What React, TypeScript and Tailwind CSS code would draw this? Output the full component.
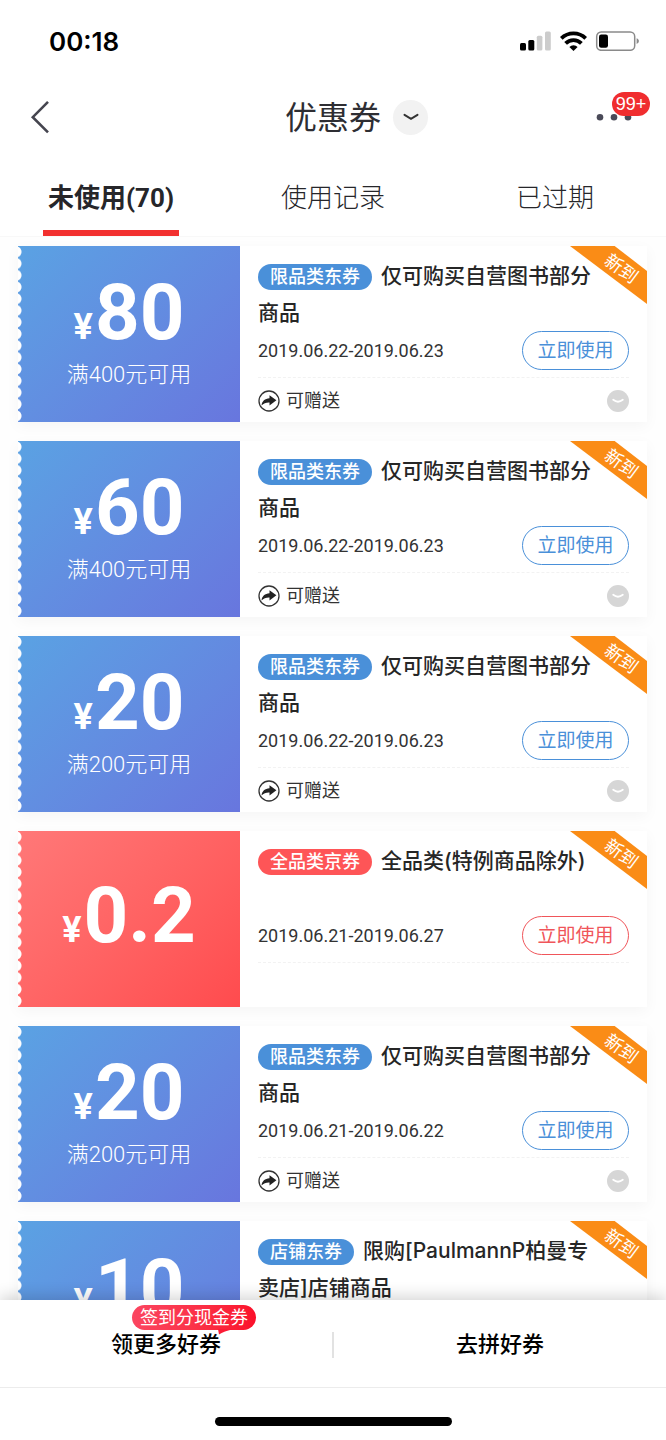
import React from "react";
import clsx from "clsx";

type Coupon = {
  id: number;
  amount: string;
  condition?: string;
  tag: string;
  title: string;
  period: string;
  giftable?: boolean;
  tone: "blue" | "red";
};

const coupons: Coupon[] = [
  {
    id: 1,
    amount: "80",
    condition: "满400元可用",
    tag: "限品类东券",
    title: "仅可购买自营图书部分商品",
    period: "2019.06.22-2019.06.23",
    giftable: true,
    tone: "blue",
  },
  {
    id: 2,
    amount: "60",
    condition: "满400元可用",
    tag: "限品类东券",
    title: "仅可购买自营图书部分商品",
    period: "2019.06.22-2019.06.23",
    giftable: true,
    tone: "blue",
  },
  {
    id: 3,
    amount: "20",
    condition: "满200元可用",
    tag: "限品类东券",
    title: "仅可购买自营图书部分商品",
    period: "2019.06.22-2019.06.23",
    giftable: true,
    tone: "blue",
  },
  {
    id: 4,
    amount: "0.2",
    tag: "全品类京券",
    title: "全品类(特例商品除外)",
    period: "2019.06.21-2019.06.27",
    tone: "red",
  },
  {
    id: 5,
    amount: "20",
    condition: "满200元可用",
    tag: "限品类东券",
    title: "仅可购买自营图书部分商品",
    period: "2019.06.21-2019.06.22",
    giftable: true,
    tone: "blue",
  },
  {
    id: 6,
    amount: "10",
    condition: "满100元可用",
    tag: "店铺东券",
    title: "限购[PaulmannP柏曼专卖店]店铺商品",
    period: "2019.06.21-2019.06.22",
    giftable: true,
    tone: "blue",
  },
];

const tabs = ["未使用(70)", "使用记录", "已过期"];

const StatusBar = () => (
  <div className="flex h-[82px] items-center justify-between pr-[26px] pl-[49px]">
    <span className="font-['Inter',sans-serif] text-[26px] font-semibold text-black">
      00:18
    </span>

    <div className="flex items-center gap-2">
      <svg width="32" height="20" viewBox="0 0 32 20" aria-hidden="true">
        <rect x="0" y="12" width="6" height="7.5" rx="1.5" fill="#000" />
        <rect x="8.3" y="9" width="6" height="10.5" rx="1.5" fill="#000" />
        <rect x="16.8" y="4.8" width="5.6" height="14.7" rx="1.5" fill="#ccc" />
        <rect x="25" y="0.5" width="5.8" height="19" rx="1.5" fill="#ccc" />
      </svg>
      <svg width="27" height="20" viewBox="0 0 27 20" aria-hidden="true">
        <g fill="none" stroke="#000" strokeWidth="3.8">
          <path d="M1.3 7.3a17.4 17.4 0 0 1 24.4 0" />
          <path d="M5.6 12.4a11 11 0 0 1 15.8 0" />
        </g>
        <path d="M9.4 16a5.800 5.800 0 0 1 8.200 0L13.5 20z" fill="#000" />
      </svg>
      <svg width="45" height="20" viewBox="0 0 45 20" aria-hidden="true">
        <rect x="1.7" y="0.9" width="38" height="18.4" rx="4.5" fill="none" stroke="#8a8a8a" strokeWidth="1.5" />
        <rect x="4" y="3.5" width="9" height="13.2" rx="2.2" fill="#000" />
        <path d="M41.6 7.2c1.6.6 2.3 1.7 2.3 2.9s-.7 2.300-2.300 2.900z" fill="#8a8a8a" />
      </svg>
    </div>
  </div>
);

const NavBar = () => (
  <div className="grid h-[70px] grid-cols-[1fr_auto_1fr] items-center">
    <button type="button" aria-label="返回" className="ml-[30px] w-6">
      <svg width="20" height="34" viewBox="0 0 20 34" fill="none" stroke="#45454f" strokeWidth="2.6">
        <path d="M18 1.800 2.800 17.200 18 32.400" />
      </svg>
    </button>

    <h1 className="pt-[2px] text-[32px] leading-[44px] text-[#2e2e33]">优惠券</h1>

    <div className="flex items-center justify-between pr-4 pl-3">
      <button
        type="button"
        aria-label="选择类型"
        className="flex size-[35px] items-center justify-center rounded-full bg-[#f2f2f2]"
      >
        <svg width="16" height="8" viewBox="0 0 16 8" fill="none" stroke="#333" strokeWidth="2" strokeLinecap="round">
          <path d="M1.500 1.800 8 5.800l6.500-4" />
        </svg>
      </button>

      <button type="button" aria-label="更多" className="relative flex h-[50px] w-[54px] items-center">
        <svg width="36" height="8" viewBox="0 0 36 8" fill="#4a4a58" aria-hidden="true">
          <circle cx="4" cy="4.300" r="3.300" />
          <circle cx="18" cy="4.300" r="3.300" />
          <circle cx="32" cy="4.300" r="3.300" />
        </svg>
        <span className="absolute top-0 right-0 h-6 w-[38px] rounded-full bg-[#f02d2f] text-center font-['Liberation_Sans',sans-serif] text-[18px] leading-6 text-white">
          99+
        </span>
      </button>
    </div>
  </div>
);

const Tabs = () => (
  <div role="tablist" className="grid h-[84px] grid-cols-3">
    {tabs.map((tab, i) => (
      <button
        key={tab}
        type="button"
        role="tab"
        aria-selected={i === 0}
        className={clsx(
          "flex flex-col items-center justify-between pt-7 text-[26px] leading-9 text-[#26262a]",
          i === 0 ? "font-bold" : "font-light"
        )}
      >
        {tab}
        {i === 0 && <span className="h-[6px] w-[136px] bg-[#f2302f]" />}
      </button>
    ))}
  </div>
);

const CouponCard = ({ coupon }: { coupon: Coupon }) => {
  const isRed = coupon.tone === "red";

  return (
    <li className="relative flex h-44 shrink-0 bg-white shadow-[0_4px_14px_rgba(0,0,0,0.04)]">
      <div
        className={clsx(
          "relative flex w-[222px] shrink-0 flex-col items-center justify-center text-white",
          isRed
            ? "bg-linear-135 from-[#ff7878] to-[#ff4b4e] pb-2"
            : "bg-linear-135 from-[#5aa2e3] to-[#6876de]"
        )}
      >
        {/* perforated edge */}
        <span className="absolute inset-y-0 left-0 w-1 bg-[radial-gradient(circle_at_-2px_50%,white_5px,transparent_6px)] bg-[length:4px_12px] bg-repeat-round" />

        <p className="flex items-baseline gap-[2px] font-bold">
          <span className="text-4xl leading-none">¥</span>
          <span className="text-[78px] leading-[65px]">{coupon.amount}</span>
        </p>
        {coupon.condition && (
          <p className="mt-4 text-[22px] leading-7 font-light">{coupon.condition}</p>
        )}
      </div>

      <div className="flex min-w-0 flex-1 flex-col px-[18px] pt-[11px]">
        <h2 className="h-[74px] pr-6 font-['Inter','Noto_Sans_CJK_SC',sans-serif] text-[21px] leading-[37px] font-medium text-[#262626]">
          <span
            className={clsx(
              "mr-[9px] inline-block rounded-full px-3 align-middle text-lg leading-[26px] text-white",
              isRed ? "bg-[#fe5557]" : "bg-[#4a90d9]"
            )}
          >
            {coupon.tag}
          </span>
          {coupon.title}
        </h2>

        <div className="flex items-center justify-between">
          <span className="text-lg text-[#333]">{coupon.period}</span>
          <button
            type="button"
            className={clsx(
              "h-[39px] w-[107px] rounded-full border pt-[2px] text-[19px]",
              isRed ? "border-[#f0555a] text-[#f0555a]" : "border-[#4a90d9] text-[#4a90d9]"
            )}
          >
            立即使用
          </button>
        </div>

        <div className="mt-[7px] flex flex-1 items-center justify-between border-t border-dashed border-[#f2f2f2] pt-[2px]">
          {coupon.giftable && (
            <>
              <span className="flex items-center gap-[6px] text-lg text-[#333]">
                <svg width="22" height="22" viewBox="0 0 22 22" aria-hidden="true">
                  <circle cx="11" cy="11" r="10" fill="none" stroke="#333" strokeWidth="1.300" />
                  <path d="M11.500 5.200 18.400 10.300l-6.900 5.100v-3c-3.400-.1-5.800.6-8 3.200.5-4.600 3.400-7 8-7.400z" fill="#222" />
                </svg>
                可赠送
              </span>
              <button
                type="button"
                aria-label="展开详情"
                className="flex size-[22px] items-center justify-center rounded-full bg-[#d6d6d6]"
              >
                <svg width="12" height="6" viewBox="0 0 12 6" fill="none" stroke="#fff" strokeWidth="1.800" strokeLinecap="round">
                  <path d="M1.200 1.800Q6 5.600 10.800 1.800" />
                </svg>
              </button>
            </>
          )}
        </div>
      </div>

      {/* corner ribbon */}
      <div className="absolute top-0 right-0 h-[58px] w-[77px] bg-[#fa8c16] [clip-path:polygon(0_0,58%_0,100%_43%,100%_100%)]">
        <span className="absolute top-3 left-[33px] rotate-[36deg] text-lg leading-[22px] text-white">
          新到
        </span>
      </div>
    </li>
  );
};

const BottomBar = () => (
  <footer className="relative bg-white shadow-[0_-4px_14px_rgba(0,0,0,0.16)]">
    <div className="flex h-[88px] items-center border-b border-[#ececec] pt-[2px] text-[22px] leading-8 font-medium text-black">
      <button type="button" className="flex flex-1 justify-center">
        <span className="relative">
          领更多好券
          <span className="absolute -top-6 left-[21px] h-[25px] w-[124px] rounded-full bg-linear-to-r from-[#fb4560] to-[#fb0f2a] text-center text-lg leading-[25px] font-normal text-white">
            签到分现金券
            <svg width="16" height="6" viewBox="0 0 16 6" fill="#fb1c36" className="absolute top-6 left-[86px]" aria-hidden="true">
              <path d="M0 0h16C9 1.500 4 3.500 1 5.500z" />
            </svg>
          </span>
        </span>
      </button>
      <span className="h-[26px] w-[2px] bg-[#e2e2e2]" />
      <button type="button" className="flex flex-1 justify-center">
        去拼好券
      </button>
    </div>

    <div className="flex h-[52px] items-center justify-center pt-[14px]">
      <span className="h-[9px] w-[237px] rounded-full bg-black" />
    </div>
  </footer>
);

const App = () => {
  return (
    <div className="flex h-screen flex-col bg-white font-['Roboto','Noto_Sans_CJK_SC',sans-serif]">
      <header>
        <StatusBar />
        <NavBar />
        <Tabs />
      </header>

      <main className="min-h-0 flex-1 overflow-hidden border-t border-[#f8f8f8] bg-[#fefefe]">
        <ul className="flex flex-col gap-[19px] pt-[9px] pr-[19px] pl-[18px]">
          {coupons.map((coupon) => (
            <CouponCard key={coupon.id} coupon={coupon} />
          ))}
        </ul>
      </main>

      <BottomBar />
    </div>
  );
};

export default App;
